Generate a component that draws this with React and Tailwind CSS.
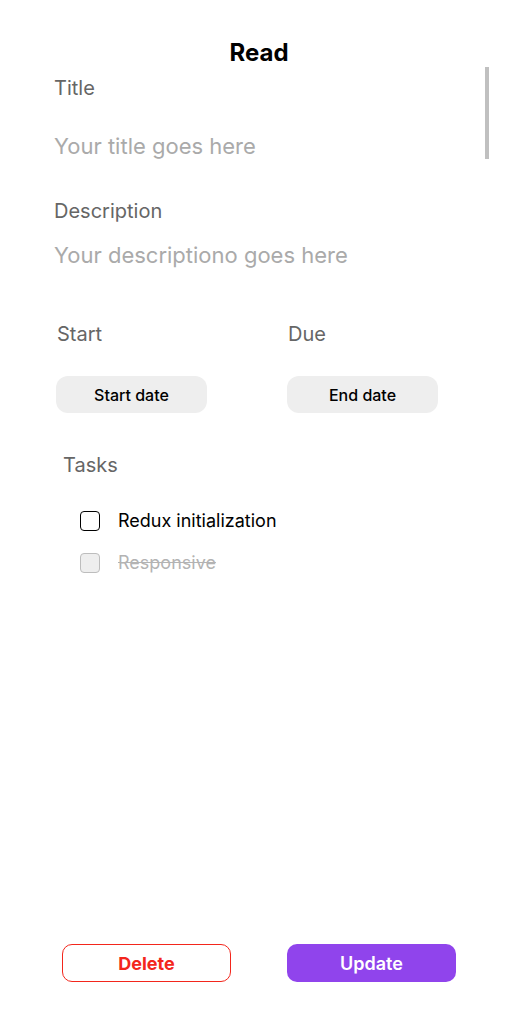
import React from "react";

function Task({ label, done }) {
  return (
    <div className="flex h-[24px] items-center">
      <span
        className={
          done
            ? "h-[20px] w-[20px] rounded-[4px] border border-[#bdbdbd] bg-[#eeeeee]"
            : "h-[20px] w-[20px] rounded-[4px] border border-black bg-white"
        }
      />
      <span
        className={
          done
            ? "ml-[18px] text-[18px] leading-[24px] text-[#b3b3b3] line-through"
            : "ml-[18px] text-[18px] leading-[24px] text-black"
        }
      >
        {label}
      </span>
    </div>
  );
}

export default function App() {
  return (
    <div className="relative flex h-[1032px] w-full flex-col bg-white font-['Inter',sans-serif]">
      {/* scroll indicator */}
      <div className="absolute left-[485px] top-[67px] h-[92px] w-[4px] bg-[#c0c0c0]" />

      <h1 className="mt-[39px] h-[28px] text-center text-[24px] font-bold leading-[28px] text-black">
        Read
      </h1>

      <div className="px-[54px]">
        <p className="mt-[9px] h-[24px] text-[20px] leading-[24px] text-[#666666]">Title</p>
        <p className="mt-[32px] h-[28px] text-[22px] leading-[28px] text-[#aaaaaa]">
          Your title goes here
        </p>
        <p className="mt-[39px] h-[24px] text-[20px] leading-[24px] text-[#666666]">Description</p>
        <p className="mt-[18px] h-[28px] text-[22px] leading-[28px] text-[#aaaaaa]">
          Your descriptiono goes here
        </p>
      </div>

      <div className="mt-[53px] flex gap-[80px] pl-[56px]">
        <div className="flex w-[151px] flex-col">
          <p className="h-[24px] pl-[1px] text-[20px] leading-[24px] text-[#666666]">Start</p>
          <button className="mt-[30px] h-[37px] w-[151px] rounded-[12px] bg-[#eeeeee] text-[16px] font-medium text-black">
            Start date
          </button>
        </div>
        <div className="flex w-[151px] flex-col">
          <p className="h-[24px] pl-[1px] text-[20px] leading-[24px] text-[#666666]">Due</p>
          <button className="mt-[30px] h-[37px] w-[151px] rounded-[12px] bg-[#eeeeee] text-[16px] font-medium text-black">
            End date
          </button>
        </div>
      </div>

      <p className="mt-[40px] h-[24px] pl-[63px] text-[20px] leading-[24px] text-[#666666]">Tasks</p>

      <div className="mt-[32px] flex flex-col gap-[18px] pl-[80px]">
        <Task label="Redux initialization" />
        <Task label="Responsive" done />
      </div>

      <div className="mt-auto mb-[50px] flex gap-[56px] pl-[62px]">
        <button className="h-[38px] w-[169px] rounded-[10px] border border-[#f3261c] bg-white pt-[1px] text-[18px] font-bold text-[#f3261c]">
          Delete
        </button>
        <button className="h-[38px] w-[169px] rounded-[10px] bg-[#9044ec] pt-[1px] text-[18px] font-semibold text-white">
          Update
        </button>
      </div>
    </div>
  );
}
